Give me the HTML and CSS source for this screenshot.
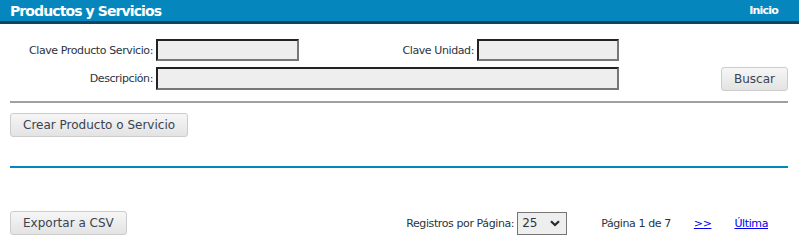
FILE: index.html
```html
<!DOCTYPE html>
<html>

<head>
    <meta http-equiv="content-type" content="text/html; charset=UTF-8">
    <title>
        Productos y Servicios
    </title>
    <link rel="stylesheet" href="styles.css">
</head>

<body>

    <div class="header">
        <span class="title">Productos y Servicios</span>
        <a class="home">Inicio</a>
    </div>

    <div class="content">
        <form class="filters">
            <label class="caption">Clave Producto Servicio:</label>
            <input class="data" type="text" name="claveProdServ">
            <label class="caption">Clave Unidad:</label>
            <input class="data" type="text" name="claveUnidad">
            <span></span>

            <label class="caption">Descripción:</label>
            <input class="data wide" type="text" name="descripcion">
            <button class="btn search" type="button">Buscar</button>
        </form>

        <hr class="rule">

        <button class="btn" type="button">Crear Producto o Servicio</button>

        <hr class="rule blue">

        <div class="footer">
            <button class="btn" type="button">Exportar a CSV</button>
            <div class="pager">
                <label class="caption">Registros por Página:</label>
                <div class="select-wrap">
                    <select name="porPagina">
                        <option selected>25</option>
                        <option>50</option>
                        <option>100</option>
                    </select>
                    <svg class="chevron" width="10" height="7" viewBox="0 0 10 7">
                        <path d="M1 1.2 L5 5 L9 1.2" fill="none" stroke="#1f2a33" stroke-width="2.2"/>
                    </svg>
                </div>
                <span class="page-info">Página 1 de 7</span>
                <a href="#" class="link">&gt;&gt;</a>
                <a href="#" class="link">Última</a>
            </div>
        </div>
    </div>

</body>

</html>
```

FILE: styles.css
```css
body {
    margin: 0;
    font-family: "DejaVu Sans", Verdana, sans-serif;
    font-size: 11px;
    color: #2b3440;
    background: white;
}

.header {
    display: flex;
    justify-content: space-between;
    align-items: center;
    height: 21px;
    padding: 0 21px 0 10px;
    background-color: #0587be;
    border-bottom: 3px solid #0c4662;
}

.title {
    color: white;
    font-weight: bold;
    font-size: 14px;
    letter-spacing: -0.9px;
}

.home {
    color: white;
    font-weight: bold;
    font-size: 11px;
    letter-spacing: -0.8px;
}

.content {
    padding: 15px 11px 0 10px;
}

.filters {
    display: grid;
    grid-template-columns: 143px 143px 172px 142px 1fr;
    column-gap: 3px;
    row-gap: 5px;
    align-items: center;
}

.caption {
    text-align: right;
    letter-spacing: -0.4px;
}

.data {
    box-sizing: border-box;
    height: 22px;
    width: 100%;
    margin: 0;
    background-color: #eeeeee;
    border: 2px solid;
    border-color: #222 #777 #777 #222;
}

.wide {
    grid-column: 2 / 5;
    height: 23px;
}

.btn {
    box-sizing: border-box;
    height: 24px;
    padding: 0 12px;
    font-family: "DejaVu Sans", Verdana, sans-serif;
    font-size: 12px;
    color: #3a4350;
    background: linear-gradient(#f6f6f6, #e3e3e3);
    border: 1px solid #cccccc;
    border-radius: 3px;
}

.search {
    justify-self: end;
    margin-top: 1px;
}

.rule {
    border: 0;
    border-top: 2px solid #a0a0a0;
    margin: 10px 0 10px 0;
}

.rule.blue {
    border-top-color: #0587be;
    margin: 29px 0 43px 0;
}

.footer {
    display: flex;
    justify-content: space-between;
    align-items: center;
}

.pager {
    display: flex;
    align-items: center;
    margin-right: 20px;
    letter-spacing: -0.4px;
}

.select-wrap {
    position: relative;
    margin-left: 3px;
}

select {
    appearance: none;
    box-sizing: border-box;
    width: 50px;
    height: 23px;
    padding: 0 0 0 4px;
    font-family: "DejaVu Sans", Verdana, sans-serif;
    font-size: 12px;
    color: #2b3440;
    background-color: #eeeeee;
    border: 1px solid #767676;
}

.chevron {
    position: absolute;
    right: 7px;
    top: 8px;
    pointer-events: none;
}

.page-info {
    margin-left: 34px;
}

.link {
    color: #0000ee;
    text-decoration: underline;
    margin-left: 23px;
}
```
